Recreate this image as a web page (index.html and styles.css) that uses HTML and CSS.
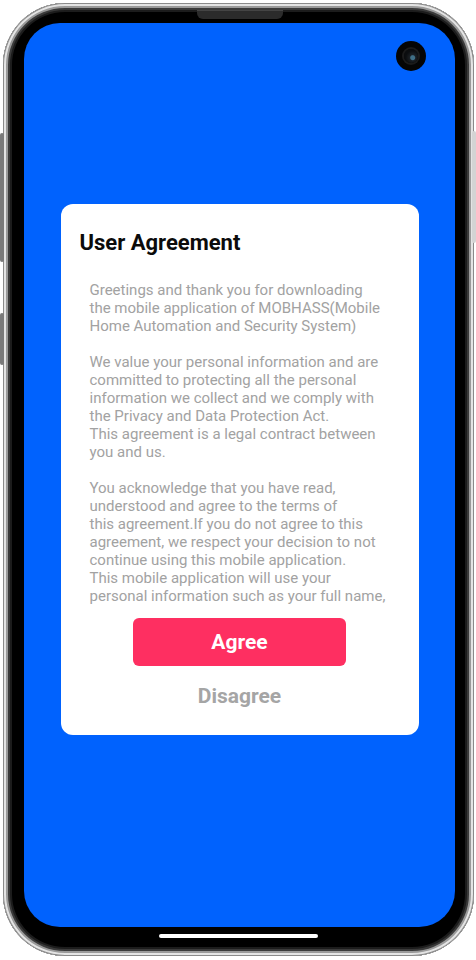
FILE: index.html
```html
<!DOCTYPE html>
<html lang="en">
<head>
<meta charset="utf-8">
<title>User Agreement</title>
<link rel="stylesheet" href="styles.css">
</head>
<body>
<div class="device">
  <span class="side-btn side-btn--power"></span>
  <span class="side-btn side-btn--vol"></span>
  <span class="side-btn side-btn--right"></span>
  <span class="speaker"></span>
  <div class="screen">
    <span class="camera"><span class="lens"></span></span>
    <section class="dialog">
      <h1 class="dialog__title">User Agreement</h1>
      <div class="dialog__body">
        <p>Greetings and thank you for downloading<br>the mobile application of MOBHASS(Mobile<br>Home Automation and Security System)</p>
        <p>We value your personal information and are<br>committed to protecting all the personal<br>information we collect and we comply with<br>the Privacy and Data Protection Act.<br>This agreement is a legal contract between<br>you and us.</p>
        <p class="last">You acknowledge that you have read,<br>understood and agree to the terms of<br>this agreement.If you do not agree to this<br>agreement, we respect your decision to not<br>continue using this mobile application.<br>This mobile application will use your<br>personal information such as your full name,</p>
      </div>
      <button class="btn btn--agree" type="button">Agree</button>
      <button class="btn btn--disagree" type="button">Disagree</button>
    </section>
  </div>
  <span class="home-bar"></span>
</div>
</body>
</html>
```

FILE: styles.css
```css
html, body {
  margin: 0;
  padding: 0;
  background: #ffffff;
}

body {
  width: 476px;
  height: 960px;
  overflow: hidden;
  font-family: Roboto, "Noto Sans", "Liberation Sans", sans-serif;
}

.device {
  position: relative;
  box-sizing: border-box;
  width: 471px;
  height: 953px;
  margin: 3px 0 0 3px;
  padding: 20px 19px 29px 21px;
  border-radius: 62px;
  background: #000;
  box-shadow:
    inset 0 0 0 1px #8a8a8a,
    inset 0 0 0 3px #e4e4e4,
    inset 0 0 0 5px #9a9a9a,
    inset 0 0 0 7px #3a3a3a,
    inset 0 0 0 9px #1c1c1c;
}

.side-btn {
  position: absolute;
  width: 4px;
  border-radius: 2px;
  background: #7a7a7a;
}

.side-btn--power {
  left: -3px;
  top: 130px;
  height: 129px;
}

.side-btn--vol {
  left: -3px;
  top: 310px;
  height: 52px;
}

.side-btn--right {
  right: -2px;
  top: 128px;
  height: 112px;
  background: #d4d4d4;
}

.speaker {
  position: absolute;
  left: 194px;
  top: 7px;
  width: 86px;
  height: 9px;
  border-radius: 0 0 6px 6px;
  background: #2b2b2b;
  box-shadow: inset 0 1px 0 #444;
}

.screen {
  position: relative;
  box-sizing: border-box;
  height: 100%;
  padding-top: 181px;
  border-radius: 36px;
  background: #0062fe;
  display: flex;
  flex-direction: column;
  align-items: center;
}

.camera {
  position: absolute;
  left: 372px;
  top: 18px;
  width: 30px;
  height: 30px;
  border-radius: 50%;
  background: #050505;
  display: flex;
  align-items: center;
  justify-content: center;
}

.lens {
  width: 14px;
  height: 14px;
  border-radius: 50%;
  background: radial-gradient(circle at 62% 62%, #3f6f86 0 2px, #1a1f24 3px, #0b0d0f 7px);
  box-shadow: 0 0 0 2px #1b1b1b;
}

.dialog {
  box-sizing: border-box;
  width: 358px;
  padding: 27px 0 27px;
  border-radius: 12px;
  background: #ffffff;
  display: flex;
  flex-direction: column;
  align-items: center;
}

.dialog__title {
  align-self: stretch;
  margin: 0;
  padding-left: 19px;
  font-size: 22px;
  line-height: 24px;
  font-weight: 700;
  color: #0b0b0b;
}

.dialog__body {
  align-self: stretch;
  height: 324px;
  margin-top: 26px;
  padding-left: 29px;
  font-size: 15px;
  line-height: 18px;
  color: #a2a2a2;
}

.dialog__body p {
  margin: 0 0 18px;
  white-space: nowrap;
}

.dialog__body p.last {
  margin-bottom: 0;
}

.btn {
  border: 0;
  padding: 0;
  font-family: inherit;
  font-size: 21px;
  font-weight: 700;
  line-height: 24px;
  background: none;
}

.btn--agree {
  width: 213px;
  height: 48px;
  margin-top: 13px;
  border-radius: 6px;
  background: #fe2f61;
  color: #ffffff;
}

.btn--disagree {
  margin-top: 18px;
  color: #a5a5a5;
}

.home-bar {
  position: absolute;
  left: 156px;
  bottom: 18px;
  width: 159px;
  height: 4px;
  border-radius: 2px;
  background: #ffffff;
}
```
